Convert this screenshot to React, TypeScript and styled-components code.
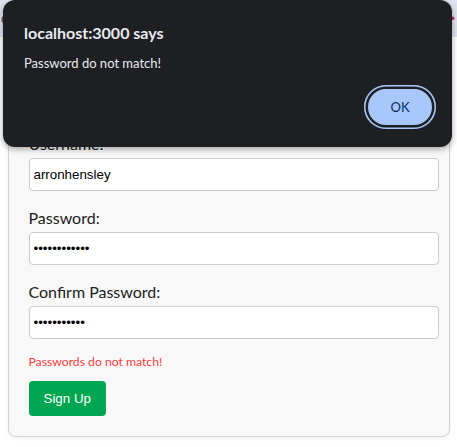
import React from "react";
import styled, { createGlobalStyle } from "styled-components";

const Global = createGlobalStyle`
  html, body { margin: 0; padding: 0; background: #ffffff; }
  body { font-family: "Lato", "Noto Sans", sans-serif; }
  * { box-sizing: content-box; }
`;

const Page = styled.div`
  position: relative;
  width: 457px;
  height: 447px;
  overflow: hidden;
  background: #ffffff;
`;

const Header = styled.header`
  height: 37px;
  background: #dfe4f2;
  display: flex;
  align-items: center;
  justify-content: space-between;
  padding: 0 2px 0 1px;
  font-family: "Liberation Sans", Arial, sans-serif;
  font-size: 12px;
`;

const Brand = styled.span`
  color: #333;
`;

const HeaderLink = styled.span`
  color: #c0304a;
`;

const Main = styled.main`
  padding-top: 20px;
`;

const Card = styled.form`
  width: 400px;
  margin: 0 auto;
  padding: 20px;
  background: #f8f8f8;
  border: 1px solid #d2d2d2;
  border-radius: 8px;
  box-shadow: 0 1px 4px rgba(0, 0, 0, 0.08);
`;

const Title = styled.h2`
  margin: 0 0 28px;
  font-size: 24px;
  line-height: 28px;
  color: #222;
`;

const Field = styled.div`
  margin-bottom: 17px;
`;

const Label = styled.label`
  display: block;
  font-family: "Lato", "Noto Sans", sans-serif;
  font-size: 16px;
  line-height: 19px;
  margin-bottom: 5px;
  color: #1c1c1c;
`;

const Input = styled.input`
  display: block;
  width: 100%;
  height: 15px;
  padding: 8px 4px;
  border: 1px solid #cccccc;
  border-radius: 4px;
  background: #ffffff;
  font-family: "Liberation Sans", Arial, sans-serif;
  font-size: 13.33px;
  line-height: 15px;
  color: #000;
  outline: none;
`;

const ErrorText = styled.p`
  margin: -2px 0 11px;
  font-family: "Lato", "Noto Sans", sans-serif;
  font-size: 12.2px;
  line-height: 16px;
  color: #ff3b3b;
`;

const SubmitButton = styled.button`
  display: block;
  height: 35px;
  padding: 0 15px;
  border: none;
  border-radius: 4px;
  background: #00a651;
  color: #ffffff;
  font-family: "Liberation Sans", Arial, sans-serif;
  font-size: 13.33px;
  cursor: pointer;
`;

const Dialog = styled.div`
  position: absolute;
  left: 3px;
  top: 0;
  width: 449px;
  height: 147px;
  box-sizing: border-box;
  padding: 22px 16px 18px 21px;
  border-radius: 12px;
  background: #1d1f23;
  box-shadow: 0 2px 6px rgba(0, 0, 0, 0.35);
  display: flex;
  flex-direction: column;
`;

const DialogTitle = styled.div`
  font-family: "Lato", "Noto Sans", sans-serif;
  font-weight: 700;
  font-size: 16px;
  line-height: 21px;
  color: #e8eaed;
`;

const DialogMessage = styled.div`
  margin-top: 12px;
  font-family: "Lato", "Noto Sans", sans-serif;
  font-size: 13px;
  line-height: 16px;
  color: #e8eaed;
`;

const DialogActions = styled.div`
  margin-top: auto;
  display: flex;
  justify-content: flex-end;
`;

const OkButton = styled.button`
  width: 72px;
  height: 44px;
  box-sizing: border-box;
  border-radius: 22px;
  border: none;
  background: #a8c7fa;
  color: #062e6f;
  font-family: "Lato", "Noto Sans", sans-serif;
  font-size: 13px;
  box-shadow: inset 0 0 0 1.5px #a8c7fa, inset 0 0 0 4px #1d1f23;
  cursor: pointer;
`;

export default function App() {
  return (
    <Page>
      <Global />
      <Header>
        <Brand>o</Brand>
        <HeaderLink>•</HeaderLink>
      </Header>
      <Main>
        <Card onSubmit={(e) => e.preventDefault()}>
          <Title>Sign Up</Title>
          <Field>
            <Label htmlFor="username">Username:</Label>
            <Input id="username" type="text" defaultValue="arronhensley" />
          </Field>
          <Field>
            <Label htmlFor="password">Password:</Label>
            <Input id="password" type="password" defaultValue="password1234" />
          </Field>
          <Field>
            <Label htmlFor="confirm">Confirm Password:</Label>
            <Input id="confirm" type="password" defaultValue="password123" />
          </Field>
          <ErrorText>Passwords do not match!</ErrorText>
          <SubmitButton type="submit">Sign Up</SubmitButton>
        </Card>
      </Main>
      <Dialog role="alertdialog">
        <DialogTitle>localhost:3000 says</DialogTitle>
        <DialogMessage>Password do not match!</DialogMessage>
        <DialogActions>
          <OkButton type="button">OK</OkButton>
        </DialogActions>
      </Dialog>
    </Page>
  );
}
